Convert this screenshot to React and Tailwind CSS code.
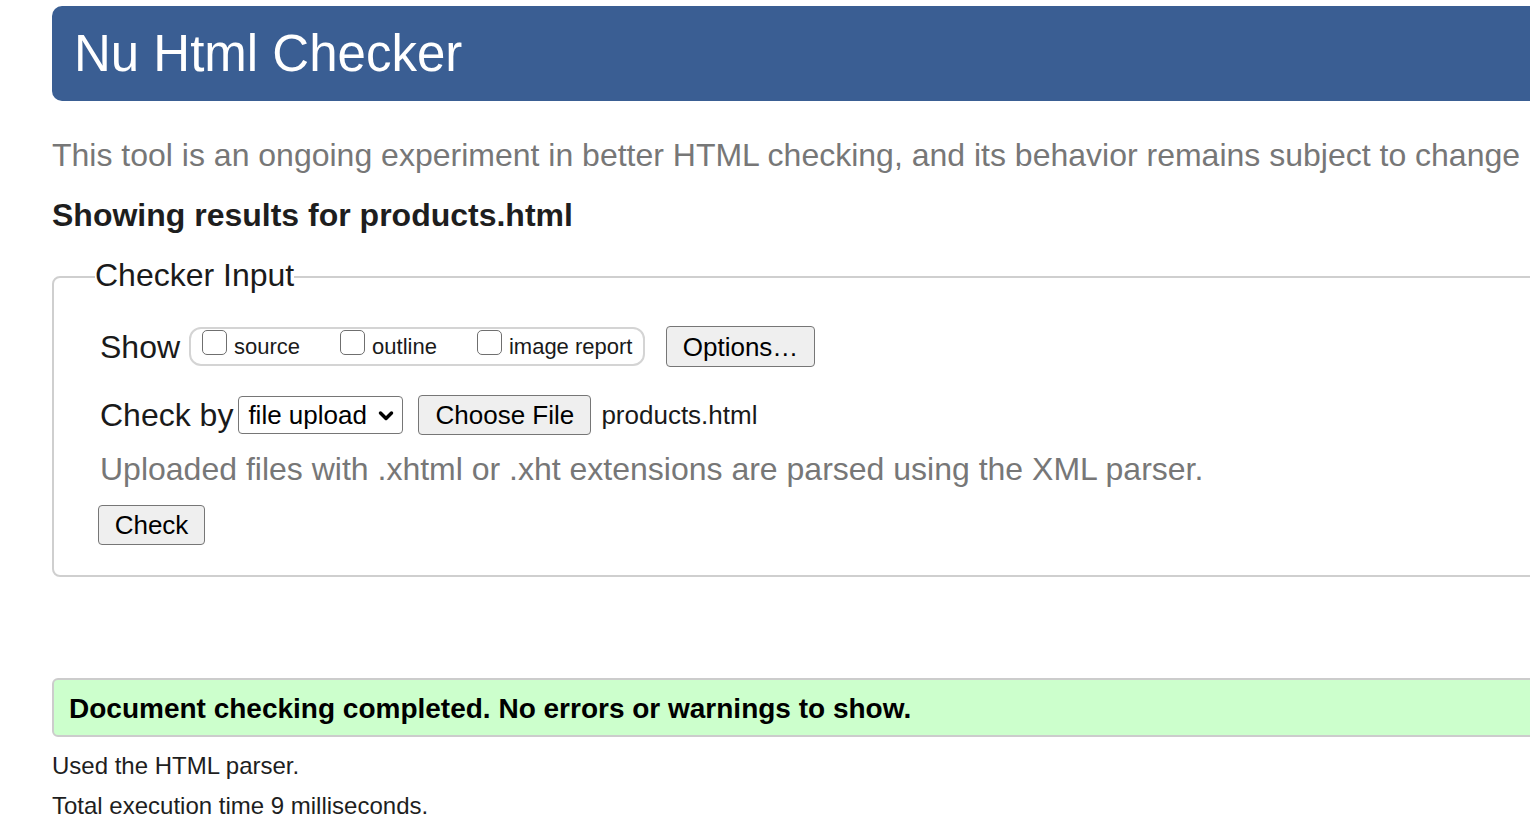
import React from "react";

function Checkbox({ label }) {
  return (
    <label className="flex items-center">
      <span className="w-[25px] h-[25px] rounded-[5px] border-[1.5px] border-[#6f6f6f] bg-white -translate-y-[4px]" />
      <span className="ml-[7px] text-[22px] leading-none text-[#1a1a1a]">{label}</span>
    </label>
  );
}

function Button({ children, className = "" }) {
  return (
    <button
      className={`bg-[#efefef] border border-[#767676] rounded-[4px] text-[26px] leading-none text-black ${className}`}
    >
      {children}
    </button>
  );
}

export default function App() {
  return (
    <div
      className="w-[1530px] h-[826px] overflow-hidden bg-white"
      style={{ fontFamily: '"Liberation Sans", Arial, sans-serif' }}
    >
      <main className="w-[1700px] pl-[52px]">
        {/* header */}
        <header className="mt-[6px] h-[95px] bg-[#3a5e93] rounded-[10px] flex items-center pl-[22px]">
          <h1 className="text-white text-[51px] leading-none">Nu Html Checker</h1>
        </header>

        <p className="mt-[35px] text-[32px] leading-[38px] text-[#777777] whitespace-nowrap">
          This tool is an ongoing experiment in better HTML checking, and its behavior remains subject to change
        </p>

        <h2 className="mt-[22px] text-[32px] leading-[38px] font-bold text-[#1e1e1e] whitespace-nowrap">
          Showing results for products.html
        </h2>

        <fieldset className="mt-[24px] border-2 border-[#cfcfcf] rounded-[8px] pl-[41px] pb-[30px]">
          <legend className="text-[32px] leading-[38px] text-[#1a1a1a] -translate-y-[2px]">Checker Input</legend>

          <div className="ml-[5px]">
            {/* show row */}
            <div className="mt-[30px] flex items-center h-[41px]">
              <span className="text-[32px] leading-none text-[#1a1a1a]">Show</span>
              <div className="ml-[9px] h-[39px] w-[456px] border-2 border-[#d4d4d4] rounded-[12px] flex items-center pl-[11px] gap-[40px]">
                <Checkbox label="source" />
                <Checkbox label="outline" />
                <Checkbox label="image report" />
              </div>
              <Button className="ml-[21px] h-[41px] w-[149px]">Options…</Button>
            </div>

            {/* check by row */}
            <div className="mt-[28px] flex items-center h-[40px]">
              <span className="text-[32px] leading-none text-[#1a1a1a]">Check by</span>
              <div className="ml-[5px] h-[38px] w-[165px] border border-[#767676] rounded-[4px] flex items-center pl-[9px] pr-[8px] justify-between">
                <span className="text-[26px] leading-none text-black">file upload</span>
                <svg width="16" height="12" viewBox="0 0 16 12" className="mt-[2px]">
                  <path d="M2.5 3 L8 8.5 L13.5 3" fill="none" stroke="black" strokeWidth="3.5" strokeLinecap="round" strokeLinejoin="round" />
                </svg>
              </div>
              <Button className="ml-[15px] h-[40px] w-[173px]">Choose File</Button>
              <span className="ml-[10px] text-[26px] leading-none text-[#1a1a1a]">products.html</span>
            </div>

            <p className="mt-[15px] text-[32px] leading-[38px] text-[#777777] whitespace-nowrap">
              Uploaded files with .xhtml or .xht extensions are parsed using the XML parser.
            </p>

            <Button className="mt-[17px] -ml-[2px] h-[40px] w-[107px]">Check</Button>
          </div>
        </fieldset>

        {/* result */}
        <div className="mt-[101px] h-[59px] bg-[#ccffcc] border-2 border-[#cccccc] rounded-[6px] flex items-center pl-[15px]">
          <p className="text-[28px] leading-none font-bold text-black whitespace-nowrap translate-y-[1px]">
            Document checking completed. No errors or warnings to show.
          </p>
        </div>

        <p className="mt-[15px] text-[24px] leading-[28px] text-[#1e1e1e]">Used the HTML parser.</p>
        <p className="mt-[12px] text-[24px] leading-[28px] text-[#1e1e1e]">Total execution time 9 milliseconds.</p>
      </main>
    </div>
  );
}
